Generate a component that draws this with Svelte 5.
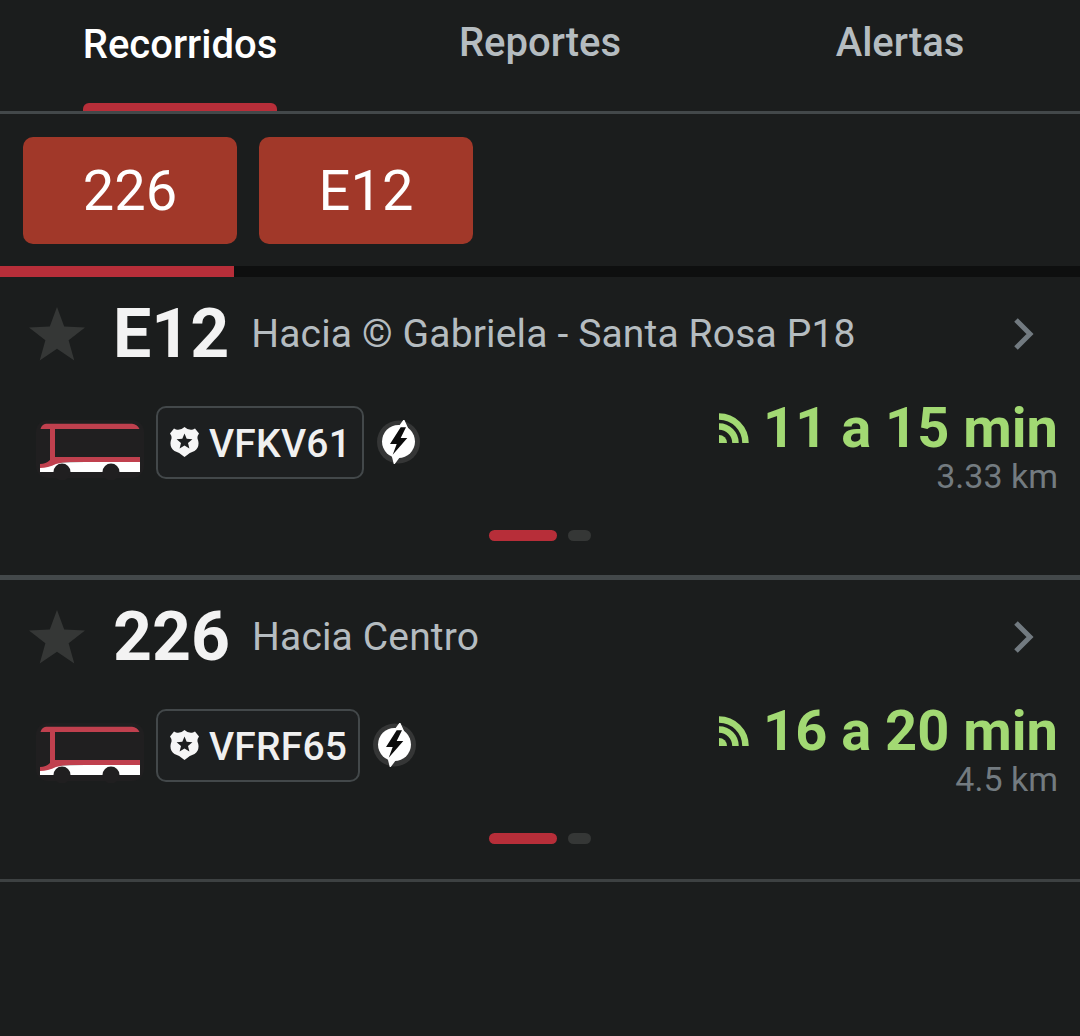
<script>
  const routes = [
    { code: 'E12', dest: 'Hacia © Gabriela - Santa Rosa P18', plate: 'VFKV61', time: '11 a 15 min', dist: '3.33 km', cls: 'first' },
    { code: '226', dest: 'Hacia Centro', plate: 'VFRF65', time: '16 a 20 min', dist: '4.5 km', cls: 'second' }
  ];
</script>

<div class="page">
  <nav class="tabs">
    <div class="tab active">Recorridos<span class="ind"></span></div>
    <div class="tab">Reportes</div>
    <div class="tab">Alertas</div>
  </nav>
  <div class="chips">
    <div class="chip">226</div>
    <div class="chip">E12</div>
  </div>
  <div class="progress"><div class="fill"></div></div>

  {#each routes as r}
    <section class="card {r.cls}">
      <div class="head">
        <svg class="star" viewBox="0 0 56 54"><path d="M28 0l7.200 19.600 20.800.8-16.400 12.900 5.700 20.100L28 41.800 10.700 53.400l5.700-20.100L0 20.400l20.800-.8z" fill="#353736"/></svg>
        <span class="code">{r.code}</span>
        <span class="dest">{r.dest}</span>
        <svg class="chev" viewBox="0 0 22 34"><path d="M3 3l14 14L3 31" fill="none" stroke="#727a80" stroke-width="5"/></svg>
      </div>
      <div class="info">
        <svg class="bus" viewBox="0 0 108 60">
          <rect x="0" y="0" width="108" height="58" rx="12" fill="#201f20"/>
          <path d="M4 52V47Q12 46 18 42.500Q26 42 50 42H104V52Z" fill="#fff"/>
          <path d="M4.500 9Q6 4 10 3.700H96Q101 4 103.500 9H19V37H104V42H34Q26 42 20 44Q12 48 4 48V44Q10 44 14 40V9Z" fill="#c0404e"/>
          <circle cx="26" cy="52" r="8.500" fill="#201f20"/>
          <circle cx="75" cy="52" r="8.500" fill="#201f20"/>
        </svg>
        <div class="plate">
          <svg class="shield" viewBox="0 0 29 30">
            <path d="M14.500 0Q18 3.500 23 2.500L25 1.500L29 6.500Q26.500 10 28 13Q30 20 24.500 24Q19 25.500 14.500 30Q10 25.500 4.500 24Q-1 20 1 13Q2.500 10 0 6.500L4 1.500L6 2.500Q11 3.500 14.500 0Z" fill="#f6f6f6"/>
            <path d="M14.500 6.500l2.200 5.300 5.700.4-4.400 3.700 1.400 5.600-4.900-3-4.900 3 1.400-5.600-4.400-3.700 5.700-.4z" fill="#1d1f20"/>
          </svg>
          <span class="plate-text">{r.plate}</span>
        </div>
        <svg class="bolt" viewBox="0 0 44 44">
          <circle cx="21.500" cy="22" r="21.500" fill="#353636"/>
          <circle cx="21.500" cy="21.500" r="16.500" fill="#fff"/>
          <path d="M27 -1L19 10H32ZM17 45L14 33H26Z" fill="#fff"/>
          <path d="M23.700 7.300L13 24H19.700L15.700 34.700L30.300 18H23.700L29 7.300Z" fill="#0c0c0c"/>
        </svg>
        <div class="eta">
          <div class="time">
            <svg class="rss" viewBox="0 0 30 30">
              <path d="M0 22a8 8 0 0 1 8 8H0z" fill="#a2d973"/>
              <path d="M0 13.500a16.500 16.500 0 0 1 16.500 16.500M0 3.500a26.500 26.500 0 0 1 26.500 26.500" fill="none" stroke="#a2d973" stroke-width="6.500"/>
            </svg>
            <span>{r.time}</span>
          </div>
          <div class="dist">{r.dist}</div>
        </div>
      </div>
      <div class="dots"><span class="dot on"></span><span class="dot"></span></div>
    </section>
    <div class="sep {r.cls}"></div>
  {/each}
</div>

<style>
  :global(body) { margin: 0; background: #1b1d1d; }
  .page {
    width: 1080px;
    height: 1036px;
    overflow: hidden;
    background: #1b1d1d;
    font-family: Roboto, sans-serif;
  }
  .tabs {
    display: grid;
    grid-template-columns: repeat(3, 360px);
    height: 111px;
    border-bottom: 3px solid #43484a;
  }
  .tab {
    position: relative;
    text-align: center;
    padding-top: 21px;
    font-size: 40px;
    line-height: 44px;
    font-weight: 500;
    color: #b5bcc0;
  }
  .tab.active { color: #fff; padding-top: 23px; }
  .ind {
    position: absolute;
    left: 83px;
    width: 194px;
    bottom: 0;
    height: 8px;
    background: #b72e39;
    border-radius: 6px 6px 0 0;
  }
  .chips {
    display: flex;
    gap: 22px;
    padding: 23px 23px 0;
    height: 152px;
    box-sizing: border-box;
  }
  .chip {
    width: 214px;
    height: 107px;
    border-radius: 10px;
    background: #a13829;
    color: #fff;
    font-size: 56px;
    line-height: 108px;
    text-align: center;
  }
  .progress { height: 11px; background: #0e0f0f; }
  .fill { width: 234px; height: 100%; background: #b72e39; }
  .card { height: 298px; box-sizing: border-box; padding-top: 24px; }
  .card.second { height: 299px; }
  .head {
    display: flex;
    align-items: center;
    height: 66px;
    padding-left: 29px;
  }
  .star { width: 56px; height: 54px; flex: none; }
  .code {
    padding-left: 28px;
    margin-right: 22px;
    font-size: 68px;
    font-weight: 700;
    line-height: 66px;
    color: #f3f3f3;
    flex: none;
  }
  .dest {
    flex: 1;
    font-size: 39px;
    letter-spacing: 0.15px;
    color: #b5bcc0;
    white-space: nowrap;
  }
  .chev { width: 22px; height: 34px; margin-right: 45px; flex: none; }
  .info {
    display: flex;
    align-items: center;
    height: 112px;
    margin-top: 19px;
    padding: 0 22px 0 36px;
  }
  .bus { width: 108px; height: 60px; flex: none; margin-top: 16px; }
  .plate {
    display: flex;
    align-items: center;
    gap: 10px;
    box-sizing: border-box;
    height: 73px;
    margin-left: 12px;
    padding: 0 11px 0 12px;
    border: 2px solid #43484a;
    border-radius: 10px;
    background: #1d1f20;
    color: #f0f0f0;
    font-size: 39px;
    font-weight: 500;
    letter-spacing: 0.2px;
  }
  .plate-text { padding-top: 4px; }
  .shield { width: 29px; height: 30px; flex: none; }
  .bolt { width: 44px; height: 44px; margin-left: 13px; flex: none; }
  .eta { margin-left: auto; text-align: right; margin-top: 12px; }
  .time {
    display: flex;
    align-items: center;
    justify-content: flex-end;
    gap: 14px;
    color: #a2d973;
    font-size: 56px;
    font-weight: 700;
    line-height: 56px;
  }
  .rss { width: 30px; height: 30px; flex: none; }
  .dist {
    font-size: 34px;
    line-height: 40px;
    color: #737b80;
  }
  .dots {
    display: flex;
    justify-content: center;
    gap: 11px;
    margin-top: 32px;
  }
  .dot { width: 23px; height: 11px; border-radius: 6px; background: #353736; }
  .dot.on { width: 68px; background: #b72e39; }
  .sep { height: 5px; background: #43484a; }
  .sep.second { height: 3px; background: #3d4142; }
</style>
